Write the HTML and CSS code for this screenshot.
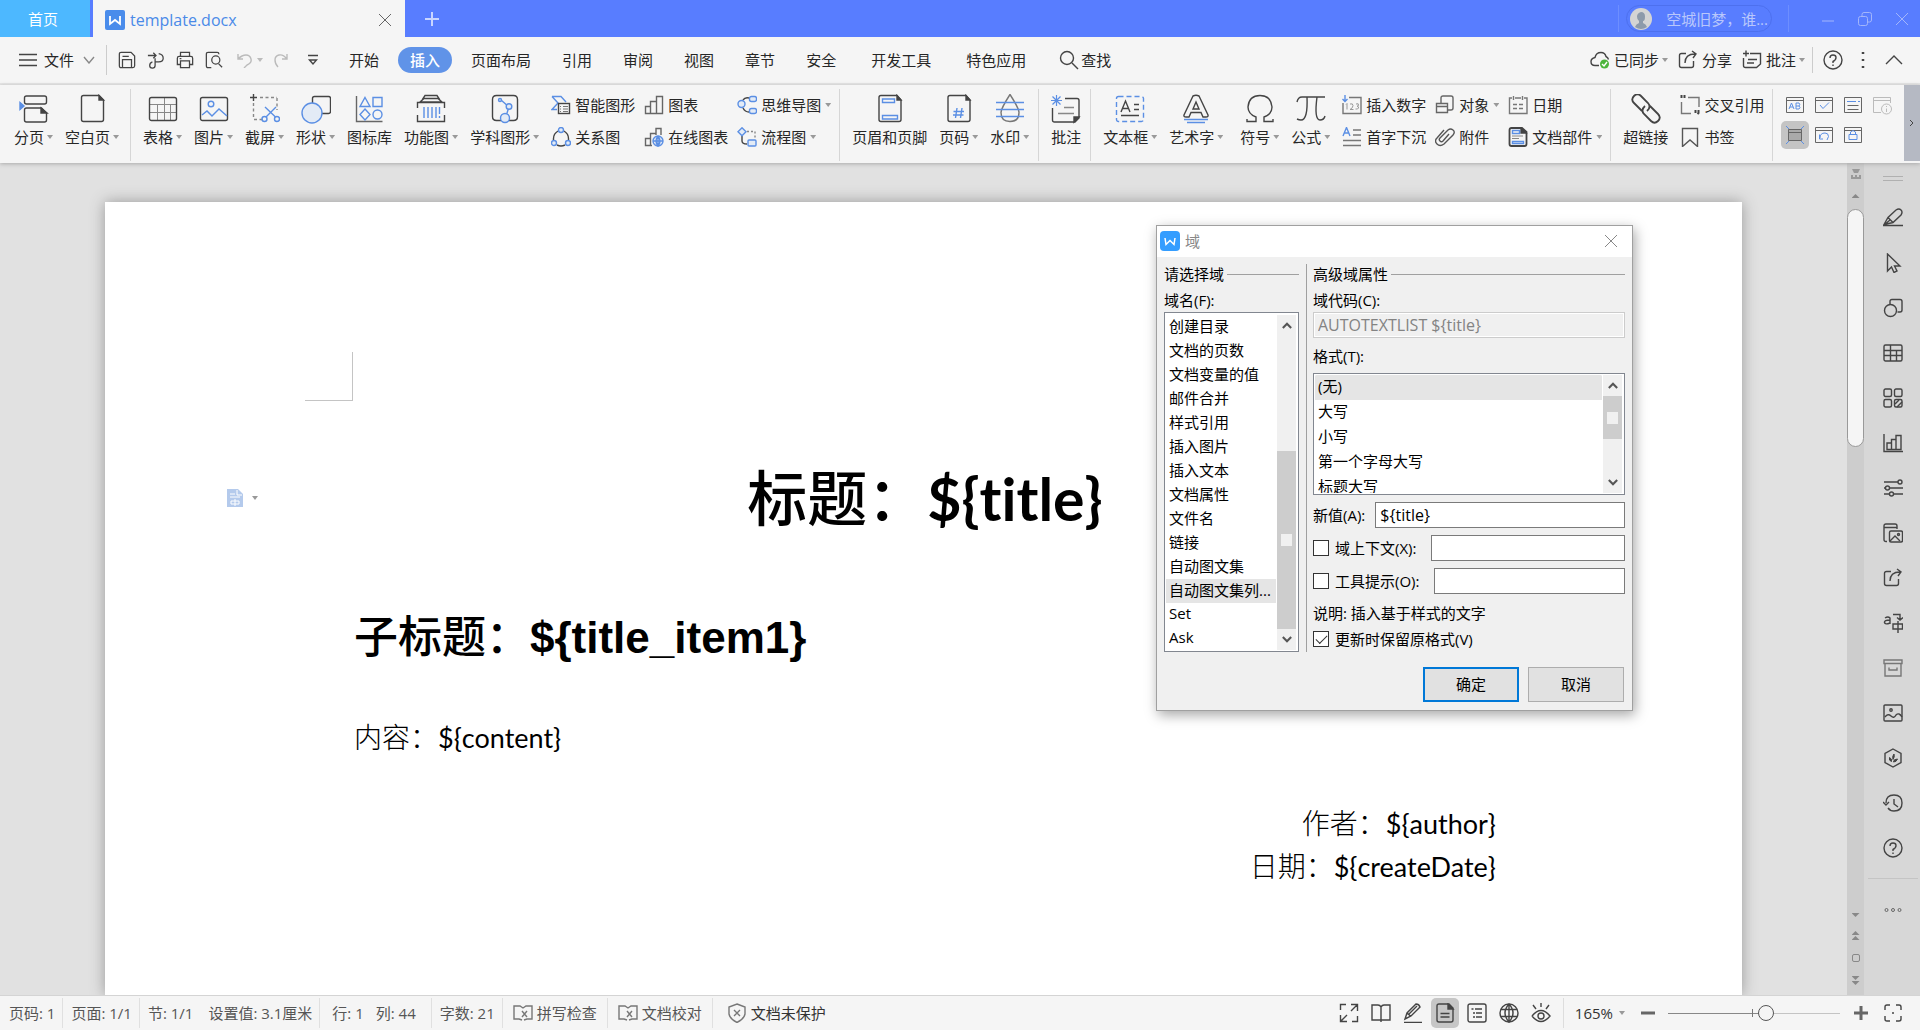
FILE: index.html
```html
<!DOCTYPE html>
<html lang="zh-CN">
<head>
<meta charset="utf-8">
<title>template.docx</title>
<link rel="stylesheet" href="styles.css">
</head>
<body>
<svg class="sprite" aria-hidden="true">
  <!-- window and menu bar -->
  <symbol id="w-doc" viewBox="0 0 20 20"><rect width="20" height="20" rx="2" fill="#4a8ceb" stroke="none"/><path d="M5 6v8l5-4 5 4V6" fill="none" stroke="#fff" stroke-width="1.8"/></symbol>
  <symbol id="w-app" viewBox="0 0 20 20"><rect width="20" height="20" rx="4" fill="#349dff" stroke="none"/><path d="M5 7l1 6.500L10 9.500l4 4L15 7" fill="none" stroke="#fff" stroke-width="1.500"/></symbol>
  <symbol id="close" viewBox="0 0 14 14"><path d="M1 1l12 12M13 1L1 13"/></symbol>
  <symbol id="plus" viewBox="0 0 16 16"><path d="M8 1v14M1 8h14"/></symbol>
  <symbol id="restore" viewBox="0 0 16 16"><rect x="1.500" y="5.500" width="9" height="9" rx="2"/><path d="M5 5V3.500Q5 1.500 7 1.500h5.500q2 0 2 2V9q0 2-2 2H11"/></symbol>
  <symbol id="burger" viewBox="0 0 20 14"><path d="M1 1.500h18M1 7h18M1 12.500h18"/></symbol>
  <symbol id="chev-down" viewBox="0 0 12 8"><path d="M1 1l5 6 5-6"/></symbol>
  <symbol id="chev-up" viewBox="0 0 18 10"><path d="M1 9l8-8 8 8"/></symbol>
  <symbol id="save" viewBox="0 0 20 20"><path d="M1.500 16.500v-13q0-2 2-2h11l4 4v11q0 2-2 2h-13q-2 0-2-2z M5 18V9.500h10V18M5 6h7"/></symbol>
  <symbol id="export" viewBox="0 0 20 20"><path d="M1 5h9M7 2l3 3-3 3M13 3q5 1 5 5t-5 4H9V8M9 12v4q0 3-3 3t-3-3 3-4"/></symbol>
  <symbol id="print" viewBox="0 0 20 20"><path d="M5 6V1.500h10V6M5 15H1.500V8q0-2 2-2h13q2 0 2 2v7H15M5 11h10v7.500H5zM4 8.500h2"/></symbol>
  <symbol id="preview" viewBox="0 0 20 20"><path d="M7 18.500H3.500q-2 0-2-2v-13q0-2 2-2h10q2 0 2 2"/><circle cx="12" cy="10" r="4.500"/><path d="M15 14l4 4"/></symbol>
  <symbol id="undo" viewBox="0 0 16 16"><path d="M2 2v5h5M2 7q4-4 8-4t5 4-4 6l-3 3"/></symbol>
  <symbol id="redo" viewBox="0 0 16 16"><path d="M14 2v5H9M14 7q-4-5-8-4T2 8t3 7"/></symbol>
  <symbol id="more-down" viewBox="0 0 10 12"><path d="M0 1.500h10M1.500 6L5 10l3.500-4z"/></symbol>
  <symbol id="search" viewBox="0 0 20 20"><circle cx="8" cy="8" r="6.500"/><path d="M13 13l6 6"/></symbol>
  <symbol id="cloud" viewBox="0 0 20 20"><path d="M9 15.500H5q-4 0-4-4 0-3 4-4 1-5 6-5 4 0 5 4 2 1 2.500 3"/><circle cx="14.500" cy="14" r="4.500" fill="#4db53c" stroke="none"/><path d="M12 14l2 2 3-4" stroke="#fff"/></symbol>
  <symbol id="share" viewBox="0 0 20 20"><path d="M8 3.500H3.500q-2 0-2 2v10q0 2 2 2h10q2 0 2-2V11M7 13q0-9 10-9M14 1l4 3-3 4"/></symbol>
  <symbol id="note-add" viewBox="0 0 20 20"><path d="M8 3.500h10.500V14l-4 3.500h-11q-2 0-2-2V8M1 3.500h6M4 .5v6M6 9.500h9M5 13h7"/></symbol>
  <symbol id="help" viewBox="0 0 20 20"><circle cx="10" cy="10" r="9"/><path d="M7 8q0-3 3-3t3 2.500-3 4V13M10 14.500V16"/></symbol>
  <symbol id="kebab" viewBox="0 0 4 18"><path d="M2 1v2M2 8v2M2 15v2" stroke-width="2.500"/></symbol>
  <!-- large ribbon -->
  <symbol id="b-break" viewBox="0 0 30 30"><path d="M5.500 8V4q0-2 2-2h18q2 0 2 2v4q0 2-2 2h-18q-2 0-2-2M27.500 19v7q0 2-2 2h-18q-2 0-2-2V16q0-2 2-2h15z"/><path d="M22 14v5h6z" fill="#444"/><path d="M1 8.500l4 3.500-4 3.500z" fill="#5b8fe4" stroke="#5b8fe4"/></symbol>
  <symbol id="b-blank" viewBox="0 0 30 30"><path d="M22 1.500H6.500q-2 0-2 2v22q0 2 2 2h18q2 0 2-2V6z"/><path d="M22 1.500V6h4.500z" fill="#444"/></symbol>
  <symbol id="b-table" viewBox="0 0 30 30"><path d="M1.500 10.500h27M1.500 18.500h27M9.500 10.500v16M16.500 18.500v8M16.500 3v16M22.500 10.500v16" stroke="#888" stroke-width="1"/><rect x="1.500" y="3.500" width="27" height="23" rx="2"/></symbol>
  <symbol id="b-pic" viewBox="0 0 30 30"><rect x="1.500" y="3.500" width="27" height="23" rx="2"/><g stroke="#5b8fe4"><circle cx="12" cy="10" r="2.800"/><path d="M3 21l5-4 5 5 7-7 8 7"/></g></symbol>
  <symbol id="b-shot" viewBox="0 0 30 30"><path d="M10 3.500h17M27 4v12M3.500 9v16M4 25.500h10" stroke-dasharray="3 2.500" stroke="#888"/><path d="M3.500 0v7M0 3.500h7"/><g stroke="#5b8fe4"><circle cx="14.500" cy="25" r="2.500"/><circle cx="27" cy="25" r="2.500"/><path d="M16 23l10-10M25.500 23L15 13"/></g></symbol>
  <symbol id="b-shape" viewBox="0 0 30 30"><rect x="11.500" y="2.500" width="18" height="17" rx="2"/><circle cx="11" cy="19" r="10" fill="#e3ebf6" stroke="#5b8fe4"/></symbol>
  <symbol id="b-lib" viewBox="0 0 30 30"><path d="M1.500 2v25.500h26" stroke="#666"/><g stroke="#5b8fe4"><path d="M10 3.500l5 9H5zM18 3.500h9v9h-9zM10 15l5 5.500-5 5.500-5-5.500z"/><circle cx="22.500" cy="20.500" r="4.500"/></g></symbol>
  <symbol id="b-func" viewBox="0 0 30 30"><path d="M9 1.500h12l2 3H7zM4 8l4-3.500h14L26 8zM1.500 14V8.500h27V14M1.500 21v6.500h27V21"/><path d="M8 13v11M12 13v11M16 13v11M20 13v11M23.500 13v7M23.500 22v2" stroke="#5b8fe4"/></symbol>
  <symbol id="b-sci" viewBox="0 0 30 30"><path d="M11 26.500H6.500q-4 0-4-4v-17q0-4 4-4h17q4 0 4 4v17q0 4-4 4H19"/><g stroke="#5b8fe4" fill="#e3ebf6"><path d="M11 6l8 7-3 9" fill="none"/><circle cx="10" cy="6" r="1.500"/><circle cx="19" cy="12.500" r="2.800"/><circle cx="15" cy="24" r="4.500"/></g></symbol>
  <symbol id="b-head" viewBox="0 0 30 30"><path d="M22 1.500H6q-2 0-2 2v22q0 2 2 2h18q2 0 2-2V6z"/><path d="M22 1.500V6h4z" fill="#444"/><path d="M7.500 5h12v3.500h-12zM7.500 21.500h15V25h-15z" stroke="#5b8fe4"/></symbol>
  <symbol id="b-num" viewBox="0 0 30 30"><path d="M22 1.500H6q-2 0-2 2v22q0 2 2 2h18q2 0 2-2V6z"/><path d="M22 1.500V6h4z" fill="#444"/><path d="M13 14l-1.500 10M18 14l-1.500 10M9.500 17.500H20M9 21h10.500" stroke="#5b8fe4"/></symbol>
  <symbol id="b-water" viewBox="0 0 30 30"><path d="M15 .5q-9 14-9 18 0 9 9 9t9-9q0-4-9-18z" stroke="#777"/><path d="M1 8.500h28M1 15.500h28M1 22.500h28" stroke="#5b8fe4"/></symbol>
  <symbol id="b-note" viewBox="0 0 30 30"><path d="M14 4.500h12q2 0 2 2V24l-4 4H3.500q-2 0-2-2V14"/><path d="M28 23h-5v5z" fill="#444"/><path d="M13 13.500h10M7 19.500h16" stroke="#888"/><path d="M5.500 1v11M0 6.500h11M1.500 2.500l8 8M9.500 2.500l-8 8" stroke="#5b8fe4" stroke-width="1.200"/></symbol>
  <symbol id="b-textbox" viewBox="0 0 30 30"><rect x="1.500" y="2.500" width="27" height="25" rx="2" stroke="#5b8fe4" stroke-dasharray="5 3"/><path d="M6 18l4.500-11L15 18M7.500 14.500h6M19 10.500h5M19 15.500h5M6 21.500h18"/></symbol>
  <symbol id="b-art" viewBox="0 0 30 30"><path d="M12 2q3-1.500 6 0l9 19q.5 2-2 2h-3l-2-4.500H10L8 23H5q-2.500 0-2-2zM15 8l-3 7h6z"/><path d="M3 25.500h24M6 28.500h18" stroke="#5b8fe4"/></symbol>
  <symbol id="b-sym" viewBox="0 0 30 30"><path d="M2 25v2.500h9V23q-8-3-8-10Q4 1.500 15 1.500T27 13q0 7-8 10v4.500h9V25"/></symbol>
  <symbol id="b-eq" viewBox="0 0 30 30"><path d="M1 8q1-5 5-5h23M11 3q1 23-6 23-2 0-4-1M21 3q-3 23 3 23 4 0 5-4" /></symbol>
  <symbol id="b-link" viewBox="0 0 30 30"><path d="M11 17L3 9Q-.5 5.500 3 2t7 0l7 7q3.500 4-1 8M19 12l8 8q3.500 3.500 0 7t-7 0l-7-7q-3.500-4 1-8" stroke-width="1.800"/></symbol>
  <!-- small ribbon -->
  <symbol id="s-smart" viewBox="0 0 20 20"><path d="M1 1.500h9l5 5.500M1 1.500L7 8l-6 6.500h5" stroke="#5b8fe4"/><rect x="7.500" y="8.500" width="11" height="10" fill="#f5f5f5"/><path d="M9 11.500h1M12 11.500h5M9 14h1M12 14h5M9 16.500h1M12 16.500h5" stroke="#777" stroke-width="1"/></symbol>
  <symbol id="s-rel" viewBox="0 0 20 20"><path d="M7 4q-5 3-4.500 9M13 4q5 3 4.500 9M6 18q4 2 8 0"/><g stroke="#5b8fe4" fill="#e3ebf6"><circle cx="10" cy="3" r="2.500"/><circle cx="3" cy="16" r="2.500"/><circle cx="17" cy="16" r="2.500"/></g></symbol>
  <symbol id="s-chart" viewBox="0 0 20 20"><path d="M1.500 11.500h5v7h-5zM6.500 6.500h6v12h-6zM12.500 1.500h6v17h-6z" stroke="#666"/></symbol>
  <symbol id="s-online" viewBox="0 0 20 20"><path d="M8 18.500H1.500v-7h5M6.500 18V6.500h5.500M12 8V1.500h5V8" stroke="#666"/><g stroke="#5b8fe4"><circle cx="14" cy="14" r="5" fill="#e3ebf6"/><path d="M9 14h10M14 9v10M14 9q-4 5 0 10 4-5 0-10"/></g></symbol>
  <symbol id="s-mind" viewBox="0 0 20 20"><path d="M6 5q2-3 6-2M6 13q2 4 6 4"/><g stroke="#5b8fe4" fill="#e3ebf6"><circle cx="4.500" cy="9" r="3.500"/><rect x="12.500" y="1.500" width="7" height="5" rx="2"/><rect x="12.500" y="13.500" width="7" height="5" rx="2"/></g></symbol>
  <symbol id="s-flow" viewBox="0 0 20 20"><path d="M10 4.500h8V12" stroke-dasharray="2 2" stroke="#888"/><path d="M5 9v5q0 3 5 3"/><g stroke="#5b8fe4" fill="#e3ebf6"><path d="M5 .8l4 4-4 4-4-4z"/><rect x="11" y="13" width="8" height="6" rx="1"/></g></symbol>
  <symbol id="s-num" viewBox="0 0 20 20"><path d="M7 2.500h12v16H1V8" stroke="#777"/><path d="M5 8.500v6M4 9.500l1-1M8 9q3-1 3 1.500t-3 4h3.500M14 9q3-1 2.500 1t-1.500 1q2 .5 1.500 2t-3 1" stroke="#999" stroke-width="1"/><path d="M3 0v6M.5 4L3 6.500 5.500 4" stroke="#5b8fe4"/></symbol>
  <symbol id="s-drop" viewBox="0 0 20 20"><path d="M1 9l3.500-8.500L8 9M2 6h5" stroke="#5b8fe4"/><path d="M11 3h8M11 8h8M1 13.500h18M1 18.500h18" stroke="#777"/></symbol>
  <symbol id="s-obj" viewBox="0 0 20 20"><path d="M6 8V3q0-2 2-2h8q2 0 2 2v10q0 2-2 2h-3M1.500 8.500h11v9h-11zM2 11.500h10" stroke="#666"/></symbol>
  <symbol id="s-clip" viewBox="0 0 20 20"><path d="M14 7l-6 7q-1.500 1.500-3 0t0-3l8-8q2.500-2 5 0t0 5l-9 9q-4 3-7 0t0-6l7-8" stroke="#555"/></symbol>
  <symbol id="s-date" viewBox="0 0 20 20"><path d="M7 3h6M16 3h3v15.500H1.500V3H4M5.500 1v4M14.500 1v4M5 9.500h4M11 9.500h4M5 13.500h4M11 13.500h4" stroke="#777"/></symbol>
  <symbol id="s-part" viewBox="0 0 20 20"><path d="M14 1H3.500q-2 0-2 2v14q0 2 2 2h13q2 0 2-2V5z" stroke-width="1.800"/><path d="M13 1v5h5z" fill="#444"/><path d="M4.500 3.500h7v3h-7zM4.500 14.500h11v2h-11z" stroke="#5b8fe4"/><path d="M4 9h11M4 11.500h7" stroke="#888" stroke-width="1"/></symbol>
  <symbol id="s-cross" viewBox="0 0 20 20"><path d="M8 2.500h11V12M1.500 7v11.500H11" stroke="#777"/><path d="M1.500 0v3M4.500 0v3M15.500 15v3M18.500 15v3l-1 1" stroke-width="2"/></symbol>
  <symbol id="s-mark" viewBox="0 0 20 20"><path d="M2.500 1.500h15v18L10 13l-7.500 6.500z" stroke="#555"/></symbol>
  <symbol id="f-ab" viewBox="0 0 20 20"><path d="M1.500 2.500h17v15h-17zM1.500 5.500h17"/><path d="M4 14l2.500-6L9 14M5 12h3M11 8v6h3q2-1.500 0-3 1.500-1.500 0-3zM11 11h3" stroke="#5b8fe4"/></symbol>
  <symbol id="f-check" viewBox="0 0 20 20"><path d="M1.500 2.500h17v15h-17zM1.500 5.500h17"/><path d="M6 10l3 3.500 6-6" stroke="#5b8fe4"/></symbol>
  <symbol id="f-list" viewBox="0 0 20 20"><path d="M1.500 2.500h17v15h-17zM4.500 10.500h11M4.500 14.500h11"/><path d="M4 6.500h9M15 6.500h2" stroke="#5b8fe4"/></symbol>
  <symbol id="f-info" viewBox="0 0 20 20"><path d="M9 17.500H1.500v-15h17V8M1.500 5.500h17" stroke="#bbb"/><circle cx="14.500" cy="14" r="5" stroke="#bbb"/><path d="M14.500 11v1M14.500 13.500V17" stroke="#bbb"/></symbol>
  <symbol id="f-shade" viewBox="0 0 20 20"><path d="M3.500 4.500h13v11h-13z" fill="#aaa"/><path d="M3.500 7.500h13"/><path d="M1 1l3 3M19 1l-3 3M1 19l3-3M19 19l-3-3" stroke="#5b8fe4"/></symbol>
  <symbol id="f-undo" viewBox="0 0 20 20"><path d="M1.500 2.500h17v15h-17zM1.500 5.500h17"/><path d="M5.500 9.500V14H9M6 13q0-5 5-5 3.500 0 3.500 3.500L13 15" stroke="#5b8fe4"/></symbol>
  <symbol id="f-lock" viewBox="0 0 20 20"><path d="M1.500 2.500h17v15h-17zM1.500 5.500h17"/><path d="M6 9.500h8v5H6zM7.500 9V7q2.500-3 5 0v2" stroke="#5b8fe4"/></symbol>
  <!-- side bar -->
  <symbol id="r-pen" viewBox="0 0 20 20"><path d="M0 17.500h20M1 16.500l4-7L13 2q3-2 5 0t0 5l-8 7.500zM5 9.500l5 5M1 17l6-5"/></symbol>
  <symbol id="r-cursor" viewBox="0 0 20 20"><path d="M4.500 1v17l4-4 2.500 5.500 3-1.500L11.500 13H17z"/></symbol>
  <symbol id="r-shape" viewBox="0 0 20 20"><path d="M7 6V3.500q0-2 2-2h8q2 0 2 2V12q0 2-2 2h-2.500"/><circle cx="7.500" cy="12.500" r="6"/></symbol>
  <symbol id="r-table" viewBox="0 0 20 20"><rect x="1" y="2" width="18" height="16" rx="1.500"/><path d="M1 7.500h18M1 12.500h18M7.500 2v16M13.500 7.500V18"/></symbol>
  <symbol id="r-grid" viewBox="0 0 20 20"><rect x="1" y="1" width="7.500" height="7.500" rx="1.500"/><rect x="11.500" y="1" width="7.500" height="7.500" rx="1.500"/><rect x="1" y="11.500" width="7.500" height="7.500" rx="1.500"/><rect x="11.500" y="11.500" width="7.500" height="7.500" rx="1.500"/><path d="M12 16l4-4M14 19l5-5"/></symbol>
  <symbol id="r-chart" viewBox="0 0 20 20"><path d="M1 1v17.500h19M4 10h4.500v6.500H4zM8.500 6.500H13v10H8.500zM13 2.500h5v14h-5z"/></symbol>
  <symbol id="r-sliders" viewBox="0 0 20 20"><path d="M1 4h14M7 10h13M1 10h1M1 16h5M11 16h9"/><circle cx="17" cy="4" r="2"/><circle cx="4.500" cy="10" r="2"/><circle cx="8.500" cy="16" r="2"/></symbol>
  <symbol id="r-media" viewBox="0 0 20 20"><path d="M4 18.500H3q-2 0-2-2V3q0-2 2-2h9q2 0 2 2v3M1 4.500h13"/><rect x="6.500" y="8" width="13" height="11" rx="1.500"/><path d="M7 18l5-5 5 5"/><circle cx="15.500" cy="11.500" r="1"/></symbol>
  <symbol id="r-trans" viewBox="0 0 20 20"><path d="M2 5q3-2 5 0v6M7 7Q1 7 1.500 9.500T7 10M10 1.500h7V7M14 4.500L17 7l3-2.500M10 11h9.500v5H10zM15 8v12"/></symbol>
  <symbol id="r-box" viewBox="0 0 20 20"><path d="M1 2h18v3.500H1zM2 5.500h16V18H2zM6 9.500V12h8V9.500" stroke="#777"/></symbol>
  <symbol id="r-pic" viewBox="0 0 20 20"><rect x="1" y="2" width="18" height="16" rx="1"/><path d="M2 14q3-4 6-1t5-1q3-3 6 2"/><circle cx="8" cy="7" r="1.200"/></symbol>
  <symbol id="r-hex" viewBox="0 0 20 20"><path d="M10 1l8 4.500v9L10 19l-8-4.500v-9z"/><path d="M10 11.500q-1-3.500 1-5.500 1 2.500-1 5.500M8.500 13.500q-3-1-2-4 2.500 1 2 4M10.500 14q0-3 4-3-1 3-4 3" fill="#444" stroke-width="1"/></symbol>
  <symbol id="r-hist" viewBox="0 0 20 20"><path d="M3 10q0-8 8-8t8 8-8 8q-4 0-6-3M0 9l3 3 3-3M11 6v5l4 3"/></symbol>
  <symbol id="r-dots" viewBox="0 0 20 20"><g stroke="#666" stroke-width="1"><circle cx="3.500" cy="10" r="1.500"/><circle cx="10" cy="10" r="1.500"/><circle cx="16.500" cy="10" r="1.500"/></g></symbol>
  <!-- status bar -->
  <symbol id="t-spell" viewBox="0 0 20 20"><path d="M9 17l-3-1H1V3h6l3 2 3-2h6v13h-5l-3 1"/><path d="M9 8l5 6M14 8l-5 6"/></symbol>
  <symbol id="t-shield" viewBox="0 0 20 20"><path d="M10 1l8 3v7q-1 5-8 8.500Q3 16 2 11V4zM7 7l6 6M13 7l-6 6"/></symbol>
  <symbol id="t-expand" viewBox="0 0 20 20"><path d="M7 1.500H1.500V7M13 18.500h5.500V13M12 1.500h6.500V8M18 2l-6 6M8 18.500H1.500V12M2 18l6-6"/></symbol>
  <symbol id="t-book" viewBox="0 0 20 20"><path d="M10 4Q9 2 7 2H1v15h9zM10 4q1-2 3-2h6v15h-9zM10 17v2"/></symbol>
  <symbol id="t-pen" viewBox="0 0 20 20"><path d="M1 19.500h18M2 16l2-6 9-9q3 0 4 3l-9 9zM4 10l4 3.500M6 11l8-8"/></symbol>
  <symbol id="t-page" viewBox="0 0 20 20"><path d="M14 1H4q-2 0-2 2v14q0 2 2 2h12q2 0 2-2V5zM5.500 10.500h9M5.500 14h9"/><path d="M13 1v5h5z" fill="#444"/></symbol>
  <symbol id="t-outline" viewBox="0 0 20 20"><rect x="1" y="1" width="18" height="18" rx="2"/><path d="M4.500 6h2M8 6h7M6 10h2M9 10h6M6 14h2M9 14h6"/></symbol>
  <symbol id="t-globe" viewBox="0 0 20 20"><circle cx="10" cy="10" r="9"/><path d="M2 6.500h16M2 13.500h16M10 1q-8 9 0 18 8-9 0-18M10 1v18"/></symbol>
  <symbol id="t-eye" viewBox="0 0 20 20"><path d="M1 13q9-11 18 0-9 11-18 0M10 0v4M2 2l3 4M18 2l-3 4"/><circle cx="10" cy="13" r="3"/></symbol>
  <symbol id="t-fit" viewBox="0 0 20 20"><path d="M7 2H4Q2 2 2 4v3M13 2h3q2 0 2 2v3M7 18H4q-2 0-2-2v-3M13 18h3q2 0 2-2v-3M9 10h2"/></symbol>
  <symbol id="c-up" viewBox="0 0 12 8"><path d="M1 7l5-5 5 5" stroke-width="2.500"/></symbol>
  <symbol id="c-down" viewBox="0 0 12 8"><path d="M1 1l5 5 5-5" stroke-width="2.500"/></symbol>
  <symbol id="para" viewBox="0 0 16 18"><path d="M0 0h11l5 5v13H0z" fill="#b4caec" stroke="none"/><path d="M3 5h5M3 8h10M4 12h8v3H4zM8 10v7M10 1v5h5" stroke="#fff" stroke-width="1"/></symbol>
  <symbol id="ruler" viewBox="0 0 10 10"><path d="M1 0h8L7 4H3z M0 6h2v2h2V6h2v2h2V6h2v4H0z" fill="#999" stroke="none"/></symbol>
</svg>

<header class="titlebar">
  <button class="tab-home">首页</button>
  <div class="tab-doc">
    <svg class="i20"><use href="#w-doc"/></svg>
    <span class="tab-name">template.docx</span>
    <button class="tab-close" aria-label="关闭标签"><svg class="i14"><use href="#close"/></svg></button>
  </div>
  <button class="tab-new" aria-label="新建"><svg class="i16"><use href="#plus"/></svg></button>
  <div class="account">
    <button class="user">
      <svg class="avatar" viewBox="0 0 22 22"><circle cx="11" cy="11" r="11" fill="#d4d4d4"/><path d="M11 4q4 0 4 4.500T13 13v2q3 1 4 4-6 4-12 0 1-3 4-4v-2q-2-1-2-4.500T11 4z" fill="#8d9aaa"/></svg>
      空城旧梦，谁...
    </button>
  </div>
  <div class="winctl">
    <button aria-label="最小化"><svg class="i14"><path d="M1 9h12"/></svg></button>
    <button aria-label="还原"><svg class="i16"><use href="#restore"/></svg></button>
    <button aria-label="关闭"><svg class="i14"><use href="#close"/></svg></button>
  </div>
</header>

<nav class="menubar">
  <button class="file"><svg class="burger"><use href="#burger"/></svg>文件<svg class="chev"><use href="#chev-down"/></svg></button>
  <div class="quick">
    <button aria-label="保存"><svg class="i18"><use href="#save"/></svg></button>
    <button aria-label="输出"><svg class="i18"><use href="#export"/></svg></button>
    <button aria-label="打印"><svg class="i18"><use href="#print"/></svg></button>
    <button aria-label="打印预览"><svg class="i18"><use href="#preview"/></svg></button>
    <button class="dim" aria-label="撤销"><svg class="i16"><use href="#undo"/></svg><i class="caret"></i></button>
    <button class="dim" aria-label="恢复"><svg class="i16"><use href="#redo"/></svg></button>
    <button class="more" aria-label="更多"><svg class="i10"><use href="#more-down"/></svg></button>
  </div>
  <div class="tabs">
    <button>开始</button><button class="on">插入</button><button>页面布局</button><button>引用</button><button>审阅</button><button>视图</button><button>章节</button><button>安全</button><button class="wide">开发工具</button><button class="wide">特色应用</button>
    <button class="find"><svg class="i20"><use href="#search"/></svg>查找</button>
  </div>
  <div class="menu-right">
    <button><svg class="i20"><use href="#cloud"/></svg>已同步<i class="caret"></i></button>
    <button><svg class="i20"><use href="#share"/></svg>分享</button>
    <button><svg class="i20"><use href="#note-add"/></svg>批注<i class="caret"></i></button>
    <span class="vline"></span>
    <button aria-label="帮助"><svg class="i20"><use href="#help"/></svg></button>
    <button class="kebab" aria-label="更多"><svg class="i-kebab"><use href="#kebab"/></svg></button>
    <button aria-label="收起功能区"><svg class="i-up"><use href="#chev-up"/></svg></button>
  </div>
</nav>

<div class="ribbon">
  <section class="group">
    <button class="big"><svg><use href="#b-break"/></svg><span>分页<i class="caret"></i></span></button>
    <button class="big"><svg><use href="#b-blank"/></svg><span>空白页<i class="caret"></i></span></button>
  </section>
  <section class="group tight">
    <button class="big"><svg><use href="#b-table"/></svg><span>表格<i class="caret"></i></span></button>
    <button class="big"><svg><use href="#b-pic"/></svg><span>图片<i class="caret"></i></span></button>
    <button class="big"><svg><use href="#b-shot"/></svg><span>截屏<i class="caret"></i></span></button>
    <button class="big"><svg><use href="#b-shape"/></svg><span>形状<i class="caret"></i></span></button>
    <button class="big"><svg><use href="#b-lib"/></svg><span>图标库</span></button>
    <button class="big"><svg><use href="#b-func"/></svg><span>功能图<i class="caret"></i></span></button>
    <button class="big"><svg><use href="#b-sci"/></svg><span>学科图形<i class="caret"></i></span></button>
    <div class="smalls">
      <button><svg><use href="#s-smart"/></svg>智能图形</button>
      <button><svg><use href="#s-chart"/></svg>图表</button>
      <button><svg><use href="#s-mind"/></svg>思维导图<i class="caret"></i></button>
      <button><svg><use href="#s-rel"/></svg>关系图</button>
      <button><svg><use href="#s-online"/></svg>在线图表</button>
      <button><svg><use href="#s-flow"/></svg>流程图<i class="caret"></i></button>
    </div>
  </section>
  <section class="group">
    <button class="big"><svg><use href="#b-head"/></svg><span>页眉和页脚</span></button>
    <button class="big"><svg><use href="#b-num"/></svg><span>页码<i class="caret"></i></span></button>
    <button class="big"><svg><use href="#b-water"/></svg><span>水印<i class="caret"></i></span></button>
  </section>
  <section class="group">
    <button class="big"><svg><use href="#b-note"/></svg><span>批注</span></button>
  </section>
  <section class="group tight">
    <button class="big"><svg><use href="#b-textbox"/></svg><span>文本框<i class="caret"></i></span></button>
    <button class="big"><svg><use href="#b-art"/></svg><span>艺术字<i class="caret"></i></span></button>
    <button class="big apart"><svg><use href="#b-sym"/></svg><span>符号<i class="caret"></i></span></button>
    <button class="big"><svg><use href="#b-eq"/></svg><span>公式<i class="caret"></i></span></button>
    <div class="smalls">
      <button><svg><use href="#s-num"/></svg>插入数字</button>
      <button><svg><use href="#s-obj"/></svg>对象<i class="caret"></i></button>
      <button><svg><use href="#s-date"/></svg>日期</button>
      <button><svg><use href="#s-drop"/></svg>首字下沉</button>
      <button><svg><use href="#s-clip"/></svg>附件</button>
      <button><svg><use href="#s-part"/></svg>文档部件<i class="caret"></i></button>
    </div>
  </section>
  <section class="group tight">
    <button class="big"><svg><use href="#b-link"/></svg><span>超链接</span></button>
    <div class="smalls one">
      <button><svg><use href="#s-cross"/></svg>交叉引用</button>
      <button><svg><use href="#s-mark"/></svg>书签</button>
    </div>
  </section>
  <section class="fields">
    <button aria-label="文字型窗体域"><svg><use href="#f-ab"/></svg></button>
    <button aria-label="复选框型窗体域"><svg><use href="#f-check"/></svg></button>
    <button aria-label="下拉型窗体域"><svg><use href="#f-list"/></svg></button>
    <button aria-label="窗体域选项" disabled><svg><use href="#f-info"/></svg></button>
    <button class="on" aria-label="窗体域底纹"><svg><use href="#f-shade"/></svg></button>
    <button aria-label="重新设置窗体域"><svg><use href="#f-undo"/></svg></button>
    <button aria-label="保护窗体"><svg><use href="#f-lock"/></svg></button>
  </section>
  <button class="ribbon-next" aria-label="向右滚动"><svg width="6" height="10"><path d="M1 2l3 3-3 3"/></svg></button>
</div>

<div class="workspace">
  <main class="canvas">
    <article class="page">
      <div class="crop"></div>
      <div class="title-row">
        <button class="para" aria-label="段落布局"><svg><use href="#para"/></svg><i class="caret"></i></button>
        <h1>标题：<span class="latin">${title}</span></h1>
      </div>
      <h2>子标题：<span class="arial">${title_item1}</span></h2>
      <p class="content">内容：<span class="latin">${content}</span></p>
      <p class="sign">作者：<span class="latin">${author}</span></p>
      <p class="sign">日期：<span class="latin">${createDate}</span></p>
    </article>
  </main>
  <div class="vscroll">
    <svg class="ruler"><use href="#ruler"/></svg>
    <i class="tri up"></i>
    <span class="thumb"></span>
    <i class="tri down last"></i>
    <span class="pair"><i class="tri up"></i><i class="tri up"></i></span>
    <span class="square"></span>
    <span class="pair"><i class="tri down"></i><i class="tri down"></i></span>
  </div>
  <aside class="side">
    <span class="grip"></span>
    <button aria-label="批改"><svg><use href="#r-pen"/></svg></button>
    <button aria-label="选择"><svg><use href="#r-cursor"/></svg></button>
    <button aria-label="形状"><svg><use href="#r-shape"/></svg></button>
    <button aria-label="表格"><svg><use href="#r-table"/></svg></button>
    <button aria-label="组件"><svg><use href="#r-grid"/></svg></button>
    <button aria-label="图表"><svg><use href="#r-chart"/></svg></button>
    <button aria-label="设置"><svg><use href="#r-sliders"/></svg></button>
    <button aria-label="素材"><svg><use href="#r-media"/></svg></button>
    <button aria-label="分享"><svg><use href="#share"/></svg></button>
    <button aria-label="翻译"><svg><use href="#r-trans"/></svg></button>
    <button aria-label="归档"><svg><use href="#r-box"/></svg></button>
    <button aria-label="图片"><svg><use href="#r-pic"/></svg></button>
    <button aria-label="推荐"><svg><use href="#r-hex"/></svg></button>
    <button aria-label="历史"><svg><use href="#r-hist"/></svg></button>
    <button aria-label="帮助"><svg><use href="#help"/></svg></button>
    <button class="side-more" aria-label="更多"><svg><use href="#r-dots"/></svg></button>
  </aside>
</div>

<footer class="status">
  <span class="cell">页码: 1</span>
  <span class="cell">页面: 1/1</span>
  <span class="cell pos"><span>节: 1/1</span><span>设置值: 3.1厘米</span></span>
  <span class="cell rowcol"><span>行: 1</span><span>列: 44</span></span>
  <span class="cell">字数: 21</span>
  <button class="cell"><svg class="i20"><use href="#t-spell"/></svg>拼写检查</button>
  <button class="cell"><svg class="i20"><use href="#t-spell"/></svg>文档校对</button>
  <button class="cell dark"><svg class="i20"><use href="#t-shield"/></svg>文档未保护</button>
  <div class="views">
    <button aria-label="全屏"><svg class="i20"><use href="#t-expand"/></svg></button>
    <button aria-label="阅读"><svg class="i20"><use href="#t-book"/></svg></button>
    <button aria-label="写作"><svg class="i20"><use href="#t-pen"/></svg></button>
    <button class="on" aria-label="页面视图"><svg class="i20"><use href="#t-page"/></svg></button>
    <button aria-label="大纲"><svg class="i20"><use href="#t-outline"/></svg></button>
    <button aria-label="Web 版式"><svg class="i20"><use href="#t-globe"/></svg></button>
    <button aria-label="护眼模式"><svg class="i20"><use href="#t-eye"/></svg></button>
  </div>
  <div class="zoom">
    <button class="pct">165%<i class="caret"></i></button>
    <button aria-label="缩小"><svg class="i16 bold"><path d="M1 8h14"/></svg></button>
    <input type="range" min="0" max="1000" value="577" aria-label="缩放">
    <button aria-label="放大"><svg class="i16 bold"><use href="#plus"/></svg></button>
    <button class="fit" aria-label="适合窗口"><svg class="i20"><use href="#t-fit"/></svg></button>
  </div>
</footer>

<form class="dialog" role="dialog" aria-label="域">
  <div class="dlg-title"><svg class="i20"><use href="#w-app"/></svg><span>域</span><button type="button" aria-label="关闭"><svg class="i14"><use href="#close"/></svg></button></div>
  <div class="dlg-body">
    <div class="dlg-left">
      <div class="legend">请选择域</div>
      <label class="lbl" for="names">域名(F):</label>
      <div class="listbox names">
        <select id="names" size="14">
          <option>创建目录</option><option>文档的页数</option><option>文档变量的值</option><option>邮件合并</option><option>样式引用</option><option>插入图片</option><option>插入文本</option><option>文档属性</option><option>文件名</option><option>链接</option><option>自动图文集</option><option selected>自动图文集列...</option><option>Set</option><option>Ask</option>
        </select>
        <div class="bar"><svg><use href="#c-up"/></svg><span class="knob"></span><svg><use href="#c-down"/></svg></div>
      </div>
    </div>
    <div class="dlg-right">
      <div class="legend">高级域属性</div>
      <label class="lbl" for="code">域代码(C):</label>
      <input class="txt code" id="code" type="text" value="AUTOTEXTLIST ${title}" disabled>
      <label class="lbl fmt" for="formats">格式(T):</label>
      <div class="listbox formats">
        <select id="formats" size="5">
          <option selected>(无)</option><option>大写</option><option>小写</option><option>第一个字母大写</option><option>标题大写</option>
        </select>
        <div class="bar"><svg><use href="#c-up"/></svg><span class="knob"></span><svg><use href="#c-down"/></svg></div>
      </div>
      <div class="field"><label for="val">新值(A):</label><input class="txt" id="val" type="text" value="${title}"></div>
      <div class="field"><input type="checkbox" id="ctx"><label for="ctx">域上下文(X):</label><input class="txt" type="text" aria-label="域上下文"></div>
      <div class="field"><input type="checkbox" id="tip"><label for="tip">工具提示(O):</label><input class="txt" type="text" aria-label="工具提示"></div>
      <div class="desc">说明: 插入基于样式的文字</div>
      <div class="keep"><input type="checkbox" id="keep" checked><label for="keep">更新时保留原格式(V)</label></div>
    </div>
  </div>
  <div class="dlg-foot"><button type="button" class="ok">确定</button><button type="button">取消</button></div>
</form>
</body>
</html>
```
FILE: styles.css
```css
* { box-sizing: border-box; }
body {
  margin: 0;
  height: 100vh;
  display: flex;
  flex-direction: column;
  overflow: hidden;
  position: relative;
  background: #e1e1e1;
  color: #262626;
  font: 15px/20px "Open Sans", "Noto Sans CJK SC", sans-serif;
}
button, input, select { font: inherit; color: inherit; }
button {
  display: flex;
  align-items: center;
  padding: 0;
  border: 0;
  background: none;
  white-space: nowrap;
}
svg {
  flex: none;
  fill: none;
  stroke: #444;
  stroke-width: 1.4;
}
.sprite { position: absolute; width: 0; height: 0; }
.i10 { width: 10px; height: 12px; }
.i14 { width: 14px; height: 14px; }
.i16 { width: 16px; height: 16px; }
.i18 { width: 18px; height: 18px; }
.i20 { width: 20px; height: 20px; }
.caret {
  width: 6px;
  height: 4px;
  margin-left: 3px;
  background: #999;
  clip-path: polygon(0 0, 100% 0, 50% 100%);
}

/* title bar */
.titlebar { display: flex; align-items: stretch; height: 37px; flex: none; background: #587dff; }
.tab-home { width: 90px; padding-right: 4px; justify-content: center; background: #4db8ff; color: #fff; }
.tab-doc {
  display: flex;
  align-items: center;
  width: 312px;
  margin-left: 3px;
  padding: 3px 13px 0 12px;
  background: #f5f5f5;
}
.tab-name { margin-left: 5px; font-size: 16px; color: #4a8ae8; }
.tab-close { margin-left: auto; }
.tab-close svg { stroke: #666; stroke-width: 1; }
.tab-new { margin-left: 19px; }
.tab-new svg { stroke: #c9d5ff; stroke-width: 2; }
.account {
  display: flex;
  align-items: center;
  margin: 5px 0 5px auto;
  padding: 0 16px 0 7px;
  border: solid #6d8eff;
  border-width: 0 1px;
}
.user {
  height: 27px;
  padding: 0 3px;
  gap: 14px;
  border: 1px solid #4d70ee;
  border-radius: 14px;
  color: #b9c7fb;
}
.avatar { width: 22px; height: 22px; stroke: none; }
.winctl { display: flex; gap: 22px; padding: 0 11px 0 32px; }
.winctl svg { stroke: #a3b6fb; stroke-width: 1; }

/* menu bar */
.menubar {
  display: flex;
  align-items: center;
  height: 48px;
  flex: none;
  padding-left: 18px;
  background: #f5f5f5;
  border-bottom: 2px solid #e6e6e6;
}
.file { height: 30px; padding-right: 11px; border-right: 1px solid #ccc; }
.burger { width: 20px; height: 14px; margin-right: 6px; }
.chev { width: 12px; height: 8px; margin-left: 9px; stroke: #888; }
.quick { display: flex; align-items: center; gap: 11px; margin-left: 11px; }
.quick .dim { margin-left: 2px; }
.quick .dim svg { stroke: #bbb; }
.quick .dim .caret { background: #bbb; margin-left: 5px; }
.quick .dim + .dim { margin-left: -1px; }
.quick .more { margin-left: 8px; }
.tabs { display: flex; align-items: center; gap: 7px; margin-left: 19px; }
.tabs button { height: 26px; padding: 0 12px; border-radius: 13px; }
.tabs .on { background: #6093e8; color: #fff; font-weight: 500; }
.tabs .wide { margin-left: 4px; }
.tabs .find { gap: 2px; margin-left: 2px; }
.menu-right { display: flex; align-items: center; gap: 10px; margin-left: auto; padding-right: 17px; }
.menu-right button .i20 { margin-right: 4px; }
.vline { width: 1px; height: 26px; margin-left: -3px; background: #ccc; }
.i-kebab { width: 4px; height: 18px; }
.i-up { width: 18px; height: 10px; }
.menu-right .kebab { margin: 0 10px 0 4px; }

/* ribbon */
.ribbon {
  position: relative;
  display: flex;
  height: 78px;
  flex: none;
  padding: 4px 0 2px;
  background: #f5f5f5;
  box-shadow: 0 1px 4px #aaa;
  z-index: 1;
}
.group {
  display: flex;
  gap: 12px;
  padding: 5px 9px 0 12px;
  border-right: 1px solid #d6d6d6;
}
.group:first-child { padding: 5px 11px 0 14px; }
.group.tight { padding-right: 8px; }
.big { flex-direction: column; align-items: center; gap: 3px; height: 53px; }
.big svg { width: 30px; height: 30px; }
.big span { display: flex; align-items: center; height: 20px; }
.apart { margin-left: 5px; }
.smalls {
  display: grid;
  grid-template-columns: auto auto auto;
  grid-template-rows: 20px 20px;
  gap: 12px 9px;
  padding-top: 1px;
}
.smalls.one { grid-template-columns: auto; }
.smalls svg { width: 20px; height: 20px; margin-right: 4px; }
.smalls .caret { margin-left: 4px; }
.fields {
  display: grid;
  grid-template-columns: repeat(4, 28px);
  grid-template-rows: 28px 28px;
  gap: 2px 1px;
  padding: 2px 0 0 8px;
}
.fields button { justify-content: center; border-radius: 5px; }
.fields .on { background: #c4c4c4; }
.fields svg { width: 20px; height: 20px; stroke: #666; stroke-width: 1; }
.ribbon-next { width: 16px; flex: none; margin: -4px 0 0 auto; justify-content: center; background: #b5b9c3; }
.ribbon-next svg { stroke-width: 1; }

/* workspace */
.workspace { display: flex; flex: 1; min-height: 0; }
.canvas { flex: 1; padding: 39px 105px 0; overflow: hidden; display: flex; }
.page {
  flex: 1;
  padding: 150px 246px 0 249px;
  background: #fff;
  box-shadow: 0 0 14px #999;
  color: #000;
}
.crop {
  width: 48px;
  height: 49px;
  margin-left: -49px;
  border: solid #c4c4c4;
  border-width: 0 1px 1px 0;
}
.title-row { position: relative; margin-top: 57px; }
.para { position: absolute; left: -127px; top: 31px; }
.para svg { width: 16px; height: 18px; }
.para .caret { margin-left: 9px; }
h1, h2, p { margin: 0; }
h1 { font-size: 60px; line-height: 80px; text-align: center; font-weight: 500; }
h1 .latin { font-size: 59px; font-weight: 700; }
h2 { margin-top: 68px; font-size: 44px; line-height: 60px; font-weight: 500; }
p { font-size: 28px; line-height: 43px; font-weight: 300; }
p .latin { font-size: 27px; font-weight: 400; }
.latin { font-family: Lato, sans-serif; font-variant-ligatures: none; line-height: 1; }
.arial { font-family: "Liberation Sans", sans-serif; font-weight: 700; line-height: 1; }
.content { margin: 50px 0 43px; }
.sign { text-align: right; }

.vscroll {
  display: flex;
  flex-direction: column;
  align-items: center;
  width: 17px;
  padding: 6px 0 10px;
  background: #cdcdcd;
}
.ruler { width: 10px; height: 10px; }
.tri { width: 8px; height: 4px; background: #888; }
.tri.up { clip-path: polygon(50% 0, 100% 100%, 0 100%); }
.tri.down { clip-path: polygon(0 0, 100% 0, 50% 100%); }
.ruler + .tri { margin: 15px 0 11px; }
.thumb { width: 17px; height: 238px; border: 1px solid #999; border-radius: 9px; background: #f5f5f5; }
.last { margin-top: auto; }
.pair { display: flex; flex-direction: column; gap: 1px; margin: 14px 0; }
.pair:last-child { margin-bottom: 0; }
.square { width: 8px; height: 8px; border: 1px solid #888; border-radius: 2px; }

.side {
  display: flex;
  flex-direction: column;
  align-items: center;
  width: 56px;
  padding: 13px 0 0 2px;
  background: #d7d7d7;
}
.grip { width: 20px; height: 5px; margin-bottom: 14px; border: solid #b0b0b0; border-width: 1px 0; }
.side button { height: 45px; }
.side svg { width: 20px; height: 20px; }
.side .side-more { width: 50px; height: 62px; margin-top: 8px; justify-content: center; border-top: 1px solid #c4c4c4; }

/* status bar */
.status {
  display: flex;
  align-items: center;
  height: 35px;
  flex: none;
  background: #f5f5f5;
  border-top: 1px solid #d4d4d4;
  color: #555;
}
.cell {
  display: flex;
  align-items: center;
  height: 30px;
  padding: 0 7px 0 8px;
  border-right: 1px solid #e0e0e0;
}
.cell svg { margin-right: 4px; stroke: #777; }
.cell:first-child { padding-left: 9px; }
button.cell { padding: 0 10px; }
.pos { gap: 15px; padding-right: 7px; }
.rowcol { gap: 12px; padding: 0 15px 0 12px; }
button.dark { padding-left: 14px; border: 0; color: #333; }
.views { display: flex; gap: 4px; margin-left: auto; padding-right: 8px; border-right: 1px solid #ddd; }
.views button { width: 28px; height: 30px; justify-content: center; border-radius: 5px; }
.views .on { background: #c6c6c6; }
.zoom { display: flex; align-items: center; padding: 0 17px 0 11px; color: #333; }
.pct { margin-right: 15px; }
.pct .caret { margin-left: 6px; }
.bold { stroke: #666; stroke-width: 3; }
.fit { margin-left: 14px; }
input[type="range"] {
  appearance: none;
  width: 172px;
  height: 18px;
  margin: 0 13px 0 12px;
  background:
    linear-gradient(#777, #777) 84px 50% / 1px 8px no-repeat,
    linear-gradient(90deg, #888 98px, #c4c4c4 98px) 0 50% / 100% 1px no-repeat;
}
input[type="range"]::-webkit-slider-thumb {
  appearance: none;
  width: 16px;
  height: 16px;
  border: 1px solid #555;
  border-radius: 50%;
  background: #f5f5f5;
}

/* floating field dialog */
.dialog {
  position: absolute;
  top: 225px;
  right: 287px;
  z-index: 2;
  width: 477px;
  border: 1px solid #a0a0a0;
  background: #f0f0f0;
  color: #000;
  box-shadow: 2px 4px 12px rgba(0, 0, 0, .35);
}
.dlg-title { display: flex; align-items: center; height: 31px; padding: 0 14px 1px 3px; background: #fff; color: #888; }
.dlg-title span { margin-left: 5px; }
.dlg-title button { margin-left: auto; }
.dlg-title svg.i14 { stroke: #888; stroke-width: 1; }
.dlg-body { display: flex; padding: 7px 7px 0; }
.dlg-left { width: 143px; padding-right: 7px; border-right: 1px solid #a0a0a0; }
.dlg-right { flex: 1; padding-left: 6px; }
.legend { display: flex; align-items: center; gap: 3px; height: 20px; white-space: nowrap; }
.legend::after { content: ""; flex: 1; height: 1px; background: #a0a0a0; }
.lbl { display: block; height: 20px; margin: 6px 0 2px; }
.lbl.fmt { margin: 8px 0 7px; }
.listbox { display: flex; padding: 1px; border: 1px solid #828790; background: #fff; }
.names { height: 340px; padding-top: 2px; }
.formats { height: 122px; }
.listbox select {
  appearance: none;
  flex: 1;
  min-width: 0;
  margin: 0;
  padding: 0;
  border: 0;
  outline: 0;
  background: #fff;
  overflow: hidden;
  scrollbar-width: none;
}
.listbox option { height: 24px; min-height: 24px; padding: 0 3px; line-height: 24px; color: #000; }
.formats option { height: 25px; line-height: 25px; }
.listbox option:checked { background: #e5e5e5 linear-gradient(#e5e5e5, #e5e5e5); color: #000; }
.bar {
  display: flex;
  flex-direction: column;
  align-items: center;
  width: 19px;
  margin: 0 1px;
  padding: 7px 0;
  background: #f0f0f0;
}
.bar svg { width: 10px; height: 7px; stroke: #555; }
.bar .knob { display: flex; width: 19px; align-items: center; justify-content: center; background: #cdcdcd; }
.bar .knob::after { content: ""; width: 11px; height: 12px; background: #f0f0f0; }
.names .knob { height: 178px; margin: auto 0 7px; }
.formats .knob { height: 43px; margin: 7px 0 auto; }
.txt { min-width: 0; height: 26px; padding: 0 4px; border: 1px solid #7a7a7a; background: #fff; outline: 0; font-size: 16px; }
.code { display: block; width: 100%; border-color: #ccc; background: #f0f0f0; box-shadow: inset 0 0 0 1px #fff; color: #838383; }
.field { display: flex; align-items: center; margin-top: 7px; }
.field .txt { flex: 1; margin-left: 15px; }
.field label:first-child + .txt { margin-left: 10px; }
input[type="checkbox"] {
  appearance: none;
  display: flex;
  flex: none;
  align-items: center;
  justify-content: center;
  width: 16px;
  height: 16px;
  margin: 0 6px 0 0;
  border: 1px solid #333;
  background: #fff;
}
input[type="checkbox"]:checked::after {
  content: "";
  width: 10px;
  height: 5px;
  border: solid #333;
  border-width: 0 0 1px 1px;
  transform: translateY(-1px) rotate(-45deg);
}
.desc { margin-top: 9px; }
.keep { display: flex; align-items: center; margin: 6px 0 3px; }
.dlg-foot { display: flex; justify-content: flex-end; gap: 9px; padding: 15px 8px 8px; }
.dlg-foot button { width: 96px; height: 35px; justify-content: center; padding-bottom: 2px; border: 1px solid #adadad; background: #e1e1e1; }
.dlg-foot .ok { border: 2px solid #0078d7; }
```
